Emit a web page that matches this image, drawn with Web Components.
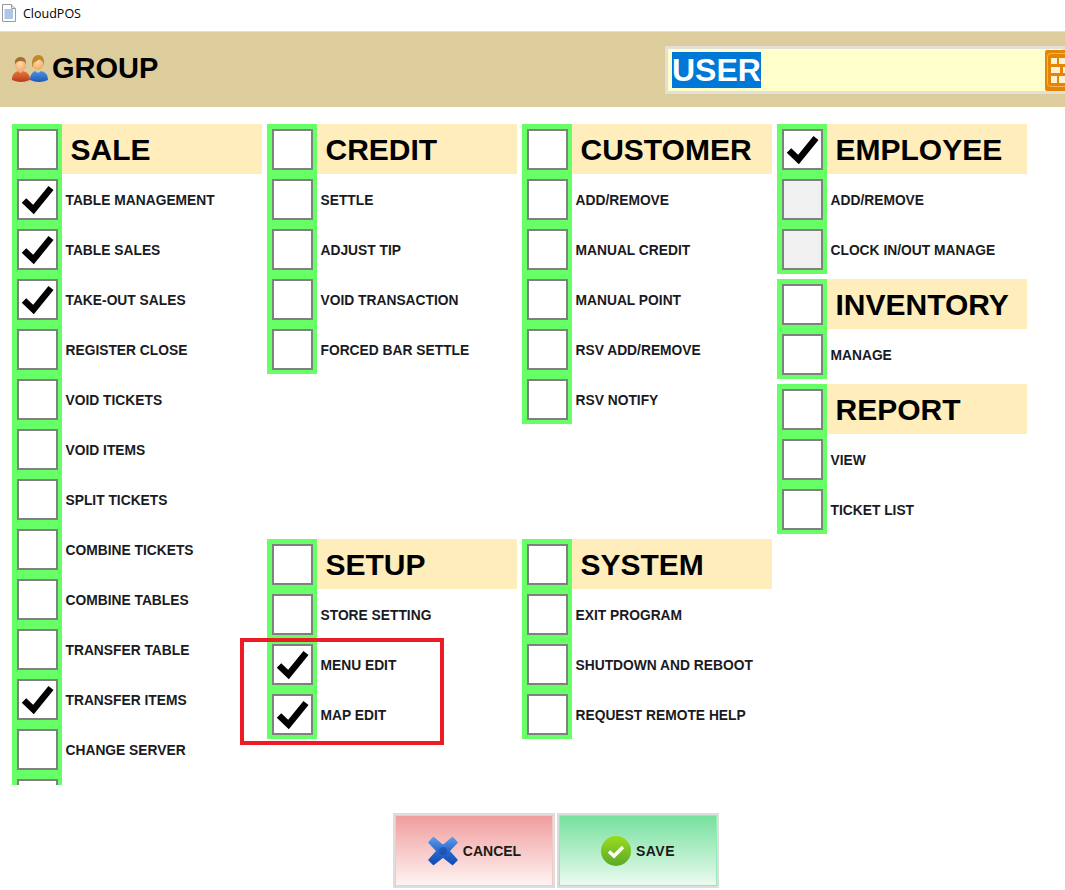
<!doctype html>
<html>
	<head>
		<meta charset="utf-8">
		<title>CloudPOS</title>
		<style>
			html, body {
				margin: 0;
				background: #fff;
				overflow: hidden;
			}
		</style>
		<script type="text/javascript">
			const CHECK = `<svg width="37" height="37" viewBox="0 0 37 37"><path d="M5 19.5L14.5 28.5L32 7" fill="none" stroke="#000" stroke-width="6.5"/></svg>`;

			function define(name, markup, init) {
				customElements.define(name, class extends HTMLElement {
					constructor() {
						super();
						this.attachShadow({mode: 'open'}).innerHTML = markup;
					}
					connectedCallback() {
						if (init) init(this, this.shadowRoot);
					}
				});
			}

			define('title-bar', `
				<style>
					:host { display: flex; align-items: center; height: 31px; box-sizing: border-box; padding: 0 0 5px 2px; gap: 7px; font: 12.5px "Open Sans", sans-serif; color: #000; }
					svg { display: block; }
				</style>
				<svg width="14" height="18" viewBox="0 0 14 18">
					<path d="M.5.5H9.5L13.5 4.5V17.5H.5Z" fill="#fff" stroke="#9a9a9a"/>
					<path d="M9.5.5V4.5H13.5" fill="#e4e4e4" stroke="#9a9a9a"/>
					<path d="M2.5 6H11M2.5 8H11M2.5 10H11M2.5 12H11M2.5 14H11" stroke="#5b8fd0" stroke-width="1.1"/>
				</svg>
				<slot></slot>`);

			define('group-icon', `
				<style>
					:host { display: block; width: 40px; height: 30px; }
					svg { display: block; }
				</style>
				<svg width="37" height="30" viewBox="0 0 37 30">
					<defs>
						<linearGradient id="r" x1="0" y1="0" x2="0" y2="1"><stop offset="0" stop-color="#ea7a3c"/><stop offset="1" stop-color="#b8391a"/></linearGradient>
						<linearGradient id="b" x1="0" y1="0" x2="0" y2="1"><stop offset="0" stop-color="#4a94e6"/><stop offset="1" stop-color="#1b57b5"/></linearGradient>
						<radialGradient id="s" cx=".45" cy=".4" r=".7"><stop offset="0" stop-color="#ffdcb0"/><stop offset="1" stop-color="#f0a060"/></radialGradient>
					</defs>
					<path d="M0 27C0 21 3 19 6 18L8.500 20L11 18C15 19 18 21 18 27Q9 31 0 27Z" fill="url(#r)"/>
					<ellipse cx="8.500" cy="11.500" rx="5.500" ry="7.500" fill="url(#s)"/>
					<path d="M3 11.500C2 6 5.500 4 8.500 4C12.500 4 14.500 7 14 11.500C13.500 9 11.500 8 8.500 8C6 8 4 9.500 3 11.500Z" fill="#a8702c"/>
					<path d="M18 27C18 21 21 19 23 18L26 20L29 18C33 19 36 21 36 27Q27 31 18 27Z" fill="url(#b)"/>
					<ellipse cx="26" cy="9.500" rx="6" ry="7.500" fill="url(#s)"/>
					<path d="M20.500 15C18.500 5 23 2 26.500 2C30.500 2 33 5.500 32 13C32 9 29.500 7 27 6.500C25.500 8 23 9 21.500 10Z" fill="#c08a2c"/>
				</svg>`);

			define('page-header', `
				<style>
					:host { display: flex; align-items: center; height: 76px; box-sizing: border-box; padding-left: 12px; background: #ddcc9c; border-top: 1px solid #e8e0c8; overflow: hidden; }
					.name { flex: 0 0 653px; display: flex; align-items: center; font: bold 29px "Liberation Sans", Arial, sans-serif; color: #000; margin-top: -3px; }
				</style>
				<div class="name"><group-icon></group-icon><slot name="title"></slot></div>
				<slot name="field"></slot>`);

			define('search-field', `
				<style>
					:host { flex: 0 0 400px; display: flex; align-items: center; height: 48px; box-sizing: border-box; border: 3px solid #e2e0d8; background: #ffffcc; padding-left: 4px; margin-top: 1px; font: bold 32px "Liberation Sans", Arial, sans-serif; }
					.wrap { position: relative; flex: 1; align-self: stretch; display: flex; align-items: center; }
					.sel { background: #0078d7; color: #fff; line-height: 36px; height: 36px; }
					.btn { position: absolute; left: 373px; top: 1px; width: 40px; height: 41px; background: #e38505; border-radius: 2px 0 0 2px; }
					svg { display: block; }
				</style>
				<div class="wrap">
					<span class="sel"><slot></slot></span>
					<div class="btn">
						<svg width="40" height="41" viewBox="0 0 40 41">
							<rect x="2.500" y="3.500" width="30" height="33" rx="3" fill="none" stroke="#f6b45c"/>
							<g fill="#fff1d4">
								<rect x="6" y="8" width="6" height="6"/><rect x="14" y="8" width="10" height="6"/>
								<rect x="6" y="17" width="9" height="6"/><rect x="18" y="17" width="10" height="6"/>
								<rect x="6" y="26" width="6" height="7"/><rect x="14" y="26" width="10" height="7"/>
							</g>
						</svg>
					</div>
				</div>`);

			define('check-box', `
				<style>
					:host { display: block; width: 41px; height: 41px; box-sizing: border-box; border: 2px solid #808080; background: #fff; }
					:host([disabled]) { background: #f0f0f0; }
					svg { display: block; }
				</style>
				<span id="mark"></span>`, (el, root) => {
				if (el.hasAttribute('checked')) root.getElementById('mark').innerHTML = CHECK;
			});

			define('perm-group', `
				<style>
					:host { display: block; width: 250px; }
					.head { display: flex; height: 50px; }
					.cell { flex: 0 0 50px; box-sizing: border-box; padding: 5px 4px 4px 5px; background: #66ff66; }
					.title { flex: 1; background: #ffedbc; padding: 1px 0 0 8.500px; font: bold 30px/50px "Liberation Sans", Arial, sans-serif; color: #000; white-space: nowrap; height: 49px; }
				</style>
				<div class="head">
					<div class="cell"><check-box id="box"></check-box></div>
					<div class="title" id="title"></div>
				</div>
				<slot></slot>`, (el, root) => {
				root.getElementById('title').textContent = el.getAttribute('label');
				if (el.hasAttribute('checked')) root.getElementById('box').setAttribute('checked', '');
			});

			define('perm-row', `
				<style>
					:host { display: flex; height: 50px; }
					.cell { flex: 0 0 50px; box-sizing: border-box; padding: 5px 4px 4px 5px; background: #66ff66; }
					.label { flex: 1; padding: 2px 0 0 3.500px; height: 48px; font: bold 13.8px/50px "Liberation Sans", Arial, sans-serif; color: #1a1a22; white-space: nowrap; }
				</style>
				<div class="cell"><check-box id="box"></check-box></div>
				<div class="label"><slot></slot></div>`, (el, root) => {
				for (const a of ['checked', 'disabled']) {
					if (el.hasAttribute(a)) root.getElementById('box').setAttribute(a, '');
				}
			});

			define('perm-board', `
				<style>
					:host { display: grid; grid-template-columns: repeat(4, 250px); column-gap: 5px; height: 661px; margin-top: 17px; padding-left: 12px; overflow: hidden; position: relative; }
					.col { display: flex; flex-direction: column; gap: 5px; }
					.mark { position: absolute; left: 240px; top: 514px; width: 204px; height: 107px; box-sizing: border-box; border: 4px solid #ed1c24; }
				</style>
				<div class="col"><slot name="a"></slot></div>
				<div class="col"><slot name="b"></slot></div>
				<div class="col"><slot name="c"></slot></div>
				<div class="col"><slot name="d"></slot></div>
				<div class="mark"></div>`);

			define('foot-bar', `
				<style>
					:host { display: flex; justify-content: center; gap: 2px; margin-top: 28px; padding-left: 47px; }
				</style>
				<slot></slot>`);

			define('foot-button', `
				<style>
					:host { display: flex; align-items: center; justify-content: center; gap: 4px; width: 162px; height: 75px; box-sizing: border-box; border: 2px solid #ddd; font: bold 14px "Liberation Sans", Arial, sans-serif; color: #1a1a1a; }
					:host([kind="cancel"]) { background: linear-gradient(#f09c9c, #fff4f4); box-shadow: inset 0 0 0 1px #f8c8c8; }
					:host([kind="save"]) { gap: 5px; letter-spacing: .5px; background: linear-gradient(#74e09c, #ecfbf1); box-shadow: inset 0 0 0 1px #90eeb4; }
				</style>
				<slot name="icon"></slot><slot></slot>`);
		</script>
	</head>
	<body>
		<title-bar>CloudPOS</title-bar>
		<page-header>
			<span slot="title">GROUP</span>
			<search-field slot="field">USER</search-field>
		</page-header>
		<perm-board>
			<perm-group slot="a" label="SALE">
				<perm-row checked>TABLE MANAGEMENT</perm-row>
				<perm-row checked>TABLE SALES</perm-row>
				<perm-row checked>TAKE-OUT SALES</perm-row>
				<perm-row>REGISTER CLOSE</perm-row>
				<perm-row>VOID TICKETS</perm-row>
				<perm-row>VOID ITEMS</perm-row>
				<perm-row>SPLIT TICKETS</perm-row>
				<perm-row>COMBINE TICKETS</perm-row>
				<perm-row>COMBINE TABLES</perm-row>
				<perm-row>TRANSFER TABLE</perm-row>
				<perm-row checked>TRANSFER ITEMS</perm-row>
				<perm-row>CHANGE SERVER</perm-row>
				<perm-row></perm-row>
			</perm-group>
			<perm-group slot="b" label="CREDIT">
				<perm-row>SETTLE</perm-row>
				<perm-row>ADJUST TIP</perm-row>
				<perm-row>VOID TRANSACTION</perm-row>
				<perm-row>FORCED BAR SETTLE</perm-row>
			</perm-group>
			<perm-group slot="b" label="SETUP" style="margin-top: 160px">
				<perm-row>STORE SETTING</perm-row>
				<perm-row checked>MENU EDIT</perm-row>
				<perm-row checked>MAP EDIT</perm-row>
			</perm-group>
			<perm-group slot="c" label="CUSTOMER">
				<perm-row>ADD/REMOVE</perm-row>
				<perm-row>MANUAL CREDIT</perm-row>
				<perm-row>MANUAL POINT</perm-row>
				<perm-row>RSV ADD/REMOVE</perm-row>
				<perm-row>RSV NOTIFY</perm-row>
			</perm-group>
			<perm-group slot="c" label="SYSTEM" style="margin-top: 110px">
				<perm-row>EXIT PROGRAM</perm-row>
				<perm-row>SHUTDOWN AND REBOOT</perm-row>
				<perm-row>REQUEST REMOTE HELP</perm-row>
			</perm-group>
			<perm-group slot="d" label="EMPLOYEE" checked>
				<perm-row disabled>ADD/REMOVE</perm-row>
				<perm-row disabled>CLOCK IN/OUT MANAGE</perm-row>
			</perm-group>
			<perm-group slot="d" label="INVENTORY">
				<perm-row>MANAGE</perm-row>
			</perm-group>
			<perm-group slot="d" label="REPORT">
				<perm-row>VIEW</perm-row>
				<perm-row>TICKET LIST</perm-row>
			</perm-group>
		</perm-board>
		<foot-bar>
			<foot-button kind="cancel">
				<svg slot="icon" width="32" height="32" viewBox="0 0 32 32" style="display:block">
					<defs><linearGradient id="x" x1="0" y1="0" x2="0" y2="1"><stop offset="0" stop-color="#5b9be8"/><stop offset=".5" stop-color="#2a68cc"/><stop offset="1" stop-color="#0f4bb8"/></linearGradient></defs>
					<path d="M6.500 2.500L16 10.500L25.500 2.500L30 7.500L22 16L30 25L25.500 29.500L16 22L6.500 29.500L2 25L10 16L2 7.500Z" fill="url(#x)" stroke="url(#x)" stroke-width="1.500" stroke-linejoin="round"/>
					<circle cx="16" cy="16" r="4" fill="#14459e" opacity=".5"/>
				</svg>
				CANCEL
			</foot-button>
			<foot-button kind="save">
				<svg slot="icon" width="30" height="30" viewBox="0 0 30 30" style="display:block">
					<defs><linearGradient id="g" x1="0" y1="0" x2="0" y2="1"><stop offset="0" stop-color="#9adc1e"/><stop offset="1" stop-color="#5ca82a"/></linearGradient></defs>
					<circle cx="15" cy="15" r="15" fill="url(#g)"/>
					<path d="M8 15.500L13 20L22 11" fill="none" stroke="#fff" stroke-width="3.500"/>
				</svg>
				SAVE
			</foot-button>
		</foot-bar>
	</body>
</html>
